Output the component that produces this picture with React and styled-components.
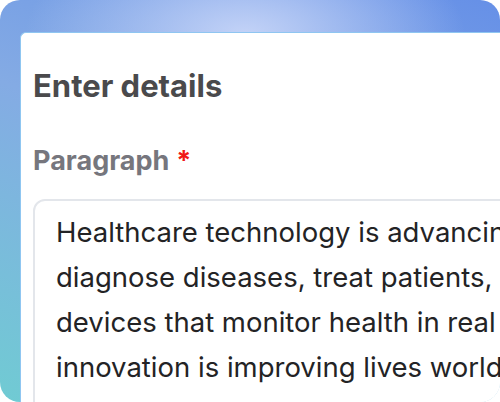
import styled, { createGlobalStyle } from "styled-components";

const GlobalStyle = createGlobalStyle`
  html, body {
    margin: 0;
    padding: 0;
    background: #ffffff;
  }
  body {
    font-family: Inter, "Noto Sans", sans-serif;
  }
`;

const StyledPanel = styled.div`
  width: 500px;
  height: 402px;
  box-sizing: border-box;
  border-radius: 20px;
  overflow: hidden;
  padding: 32px 0 0 20px;
  display: flex;
  background:
    radial-gradient(ellipse 220px 110px at 245px 35px, rgba(200, 214, 248, 0.95), rgba(200, 214, 248, 0) 100%),
    linear-gradient(200deg, #6690e7 0%, #84abe4 45%, #70cbd3 100%);
`;

const StyledCard = styled.div`
  flex: 1;
  background: #ffffff;
  border: 1px solid #8fc6f1;
  border-right: none;
  border-bottom: none;
  border-radius: 6px 0 0 0;
  padding: 34px 0 0 12px;
  display: flex;
  flex-direction: column;
  overflow: hidden;
`;

const StyledTitle = styled.h2`
  margin: 0;
  font-size: 31px;
  font-weight: 700;
  color: #4a4a4c;
  line-height: 1.21;
`;

const StyledLabel = styled.label`
  margin-top: 40px;
  font-size: 27px;
  font-weight: 700;
  color: #76767d;
  line-height: 1.21;
`;

const StyledRequired = styled.span`
  color: #f01818;
  margin-left: 7px;
`;

const StyledTextArea = styled.textarea`
  margin-top: 22px;
  width: 640px;
  height: 300px;
  flex-shrink: 0;
  box-sizing: border-box;
  border: 2px solid #e3e6eb;
  border-radius: 12px;
  padding: 9px 0 0 21px;
  font-family: Inter, "Noto Sans", sans-serif;
  font-size: 27.5px;
  line-height: 45px;
  color: #232325;
  resize: none;
  overflow: hidden;
  outline: none;
  white-space: pre;
`;

const paragraph = [
  "Healthcare technology is advancing rapidly, changing how doctors",
  "diagnose diseases, treat patients, and manage care. From wearable",
  "devices that monitor health in real time to AI-powered tools, this",
  "innovation is improving lives worldwide.",
].join("\n");

function App() {
  return (
    <>
      <GlobalStyle />
      <StyledPanel>
        <StyledCard>
          <StyledTitle>Enter details</StyledTitle>
          <StyledLabel>
            Paragraph<StyledRequired>*</StyledRequired>
          </StyledLabel>
          <StyledTextArea defaultValue={paragraph} readOnly />
        </StyledCard>
      </StyledPanel>
    </>
  );
}

export default App;
